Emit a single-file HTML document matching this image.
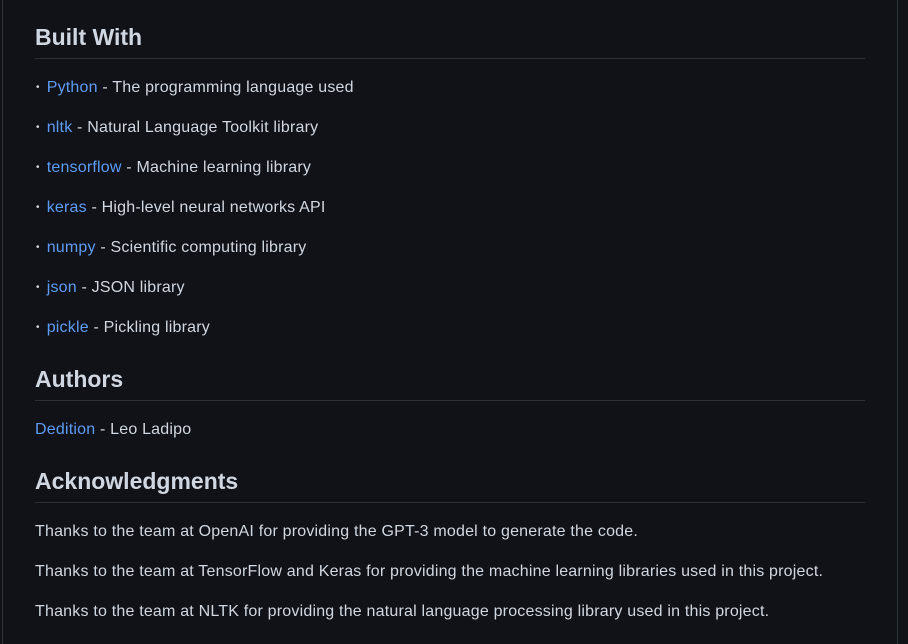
<!DOCTYPE html>
<html><head><style>
body{margin:0;background:#111217;width:908px;height:644px;overflow:hidden;font-family:"Liberation Sans",sans-serif;color:#d1d7e0;position:relative}
.bl{position:absolute;top:0;bottom:0;width:1px;background:#30363d}
.t{position:absolute;left:35px;font-size:16px;line-height:20px;white-space:nowrap;letter-spacing:0.2px}
.h{position:absolute;left:35px;font-size:23px;font-weight:bold;line-height:30px;color:#d1d7e0}
.r{position:absolute;left:35px;width:830px;height:1px;background:#2a2f36}
a{color:#5c9cf5;text-decoration:none}
.d{color:#d1d7e0;font-size:10px;vertical-align:2px;margin-left:1px;margin-right:7px}
</style></head><body>
<div class="bl" style="left:2px"></div><div class="bl" style="left:897px"></div>
<div class="h" style="top:22px">Built With</div><div class="r" style="top:58px"></div>
<div class="t" style="top:78px"><span class="d">•</span><a>Python</a> - The programming language used</div>
<div class="t" style="top:118px"><span class="d">•</span><a>nltk</a> - Natural Language Toolkit library</div>
<div class="t" style="top:158px"><span class="d">•</span><a>tensorflow</a> - Machine learning library</div>
<div class="t" style="top:198px"><span class="d">•</span><a>keras</a> - High-level neural networks API</div>
<div class="t" style="top:238px"><span class="d">•</span><a>numpy</a> - Scientific computing library</div>
<div class="t" style="top:278px"><span class="d">•</span><a>json</a> - JSON library</div>
<div class="t" style="top:318px"><span class="d">•</span><a>pickle</a> - Pickling library</div>
<div class="h" style="top:364px">Authors</div><div class="r" style="top:400px"></div>
<div class="t" style="top:420px"><a>Dedition</a> - Leo Ladipo</div>
<div class="h" style="top:466px">Acknowledgments</div><div class="r" style="top:502px"></div>
<div class="t" style="top:522px">Thanks to the team at OpenAI for providing the GPT-3 model to generate the code.</div>
<div class="t" style="top:562px">Thanks to the team at TensorFlow and Keras for providing the machine learning libraries used in this project.</div>
<div class="t" style="top:602px">Thanks to the team at NLTK for providing the natural language processing library used in this project.</div>
</body></html>
